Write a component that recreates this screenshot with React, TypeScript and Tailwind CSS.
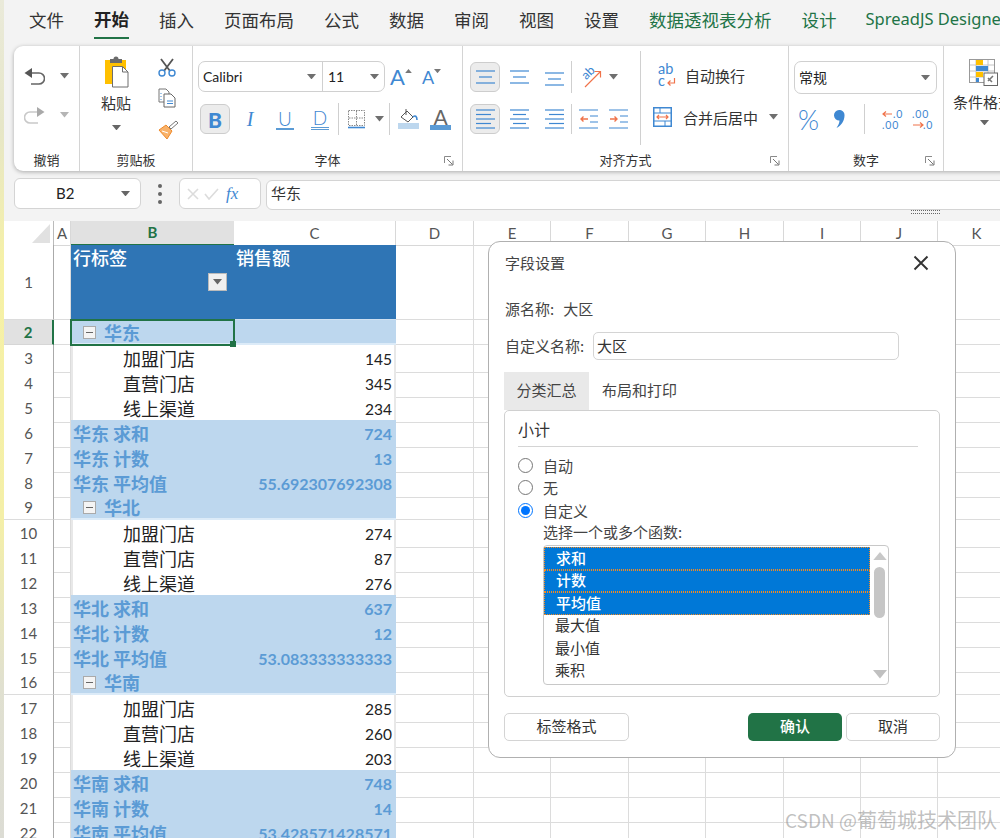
import React from "react";

const BLUE = "#3f88d2";
const ORANGE = "#f0734a";
const lato = "font-['Lato','Noto_Sans_CJK_SC',sans-serif]";

const Tri = ({ c = "#6f6f6f", w = 9, up = false }: { c?: string; w?: number; up?: boolean }) => (
  <svg width={w} height={w * 0.6} viewBox="0 0 10 6" className="shrink-0 block">
    <polygon points={up ? "5,0 10,6 0,6" : "0,0 10,0 5,6"} fill={c} />
  </svg>
);

const Lines = ({ lines, w = 19, h = 20 }: { lines: number[][]; w?: number; h?: number }) => (
  <svg width={w} height={h} viewBox={`0 0 ${w} ${h}`} className="shrink-0 block">
    {lines.map((l, i) => (
      <line key={i} x1={l[0]} x2={l[1]} y1={l[2]} y2={l[2]} stroke={BLUE} strokeWidth="1.2" />
    ))}
  </svg>
);

const Launcher = () => (
  <svg width="10" height="10" viewBox="0 0 10 10" className="block">
    <path d="M.5 7V.5H7" fill="none" stroke="#8a8a8a" />
    <path d="M3 3l5.5 5.5M9 4.5V9H4.5" fill="none" stroke="#777" />
  </svg>
);

const Undo = ({ redo = false }: { redo?: boolean }) => {
  const line = redo ? "#c9c9c9" : "#666";
  const head = redo ? "#a9a9a9" : "#555";
  return (
    <svg width="21" height="19" viewBox="0 0 21 19" className="block" style={redo ? { transform: "scaleX(-1)" } : undefined}>
      <path d="M3 6h12a5 5 0 0 1 0 11H7" fill="none" stroke={line} strokeWidth="1.6" />
      <polygon points="0.5,6 8,1 8,11" fill={head} />
    </svg>
  );
};

const PasteIcon = () => (
  <svg width="26" height="33" viewBox="0 0 26 33" className="block">
    <rect x="1" y="5" width="21" height="24" fill="#ffc000" />
    <path d="M6 4h3.5a2.5 2.5 0 0 1 5 0H18v4H6z" fill="#6b6b6b" />
    <path d="M8.5 11.5h10l5.5 5.5v15H8.5z" fill="#fff" stroke="#6e6e6e" strokeWidth="1" />
    <path d="M18.5 11.5v5.5h5.5" fill="none" stroke="#6e6e6e" />
  </svg>
);

const Cut = () => (
  <svg width="18" height="19" viewBox="0 0 18 19" className="block">
    <path d="M3 1l9 12M15 1L6 13" stroke="#555" strokeWidth="1.8" fill="none" />
    <circle cx="4" cy="15" r="3" fill="none" stroke={BLUE} strokeWidth="1.4" />
    <circle cx="14" cy="15" r="3" fill="none" stroke={BLUE} strokeWidth="1.4" />
  </svg>
);

const Copy = () => (
  <svg width="18" height="20" viewBox="0 0 18 20" className="block">
    <path d="M1 1h7l3 3v10H1z" fill="#fff" stroke="#777" />
    <path d="M6 6h7l4 4v9H6z" fill="#fff" stroke="#666" />
    <path d="M3 5v1M3 8v1M3 11v1" stroke={BLUE} />
    <path d="M9 13h6M9 15.5h6" stroke={BLUE} />
  </svg>
);

const Brush = () => (
  <svg width="21" height="20" viewBox="0 0 21 20" className="block">
    <path d="M1 10l7-5 6 6-5 8z" fill="#f9b26a" stroke="#ee8a2c" />
    <path d="M4 11l6 2" stroke="#fff" />
    <path d="M11 7l2 2 7-6-2-2z" fill="#fff" stroke="#777" />
  </svg>
);

const BorderIcon = () => (
  <svg width="17" height="19" viewBox="0 0 17 19" className="block">
    <rect x=".5" y=".5" width="16" height="15" fill="none" stroke="#888" strokeDasharray="1.5 1" />
    <path d="M8.5 1v15M1 8h15" stroke="#888" strokeDasharray="1.5 1" />
    <path d="M0 17.5h17" stroke={BLUE} strokeWidth="1.6" />
  </svg>
);

const Fill = () => (
  <svg width="21" height="20" viewBox="0 0 21 20" className="block">
    <path d="M3 8l6-6 6 6-5 5z" fill="#fff" stroke="#555" />
    <path d="M8 0v6" stroke="#555" />
    <path d="M15 8c2-2 4-1 4 3" fill="none" stroke={BLUE} strokeWidth="1.6" />
    <rect x="0" y="14" width="21" height="6" fill="#bdd7ee" />
  </svg>
);

const FontColor = () => (
  <div className="w-[21px] flex flex-col items-center">
    <span className={`${lato} text-[21px] leading-[17px] h-[17px] text-[#666]`}>A</span>
    <span className="block w-[21px] h-[5px] bg-[#5b9bd5]" />
  </div>
);

const Orient = () => (
  <svg width="23" height="23" viewBox="0 0 23 23" className="block overflow-visible">
    <text x="3" y="12" fontSize="12.5" fill={BLUE} fontFamily="Lato" transform="rotate(-45 8 8)">ab</text>
    <path d="M6 21L21 6M15.5 5.5h6v6" fill="none" stroke={ORANGE} strokeWidth="1.2" />
  </svg>
);

const Wrap = () => (
  <svg width="18" height="23" viewBox="0 0 18 23" className="block overflow-visible">
    <text x="0" y="10" fontSize="14.5" fill={BLUE} fontFamily="Lato">ab</text>
    <text x="0" y="22" fontSize="14.5" fill={BLUE} fontFamily="Lato">c</text>
    <path d="M16.5 14v5H10M12.5 16.5L10 19l2.5 2.5" fill="none" stroke={ORANGE} strokeWidth="1.2" />
  </svg>
);

const Merge = () => (
  <svg width="19" height="20" viewBox="0 0 19 20" className="block">
    <rect x=".75" y=".75" width="17.5" height="18.5" fill="#fff" stroke={BLUE} strokeWidth="1.5" />
    <path d="M1 6h17M1 14h17M7 1v5M12 14v5" stroke={BLUE} />
    <path d="M4 10h11M6 8l-2 2 2 2M13 8l2 2-2 2" fill="none" stroke={ORANGE} strokeWidth="1.2" />
  </svg>
);

const Indent = ({ inc = false }: { inc?: boolean }) => (
  <svg width="19" height="20" viewBox="0 0 19 20" className="block">
    <path d="M0 1h19M0 19h19" stroke={BLUE} strokeWidth="1.2" />
    <path d="M11 7h8M11 13h8" stroke={BLUE} strokeWidth="1.2" />
    {inc ? (
      <path d="M1 10h7M5.5 7.5L8 10l-2.5 2.5" fill="none" stroke={ORANGE} strokeWidth="1.4" />
    ) : (
      <path d="M2 10h7M4.5 7.5L2 10l2.5 2.5" fill="none" stroke={ORANGE} strokeWidth="1.4" />
    )}
  </svg>
);

const Comma = () => (
  <svg width="11" height="18" viewBox="0 0 11 18" className="block">
    <path d="M5 0a5 5 0 0 1 5.5 5.5c0 5-3 10-8 12.5 2-3 3-5.5 3-7.5A5 5 0 0 1 5 0z" fill={BLUE} />
  </svg>
);

const Dec = ({ inc = false }: { inc?: boolean }) => (
  <svg width="20" height="21" viewBox="0 0 20 21" className="block overflow-visible">
    {inc ? (
      <>
        <text x="0" y="9" fontSize="10.5" fill={BLUE} fontFamily="Lato" letterSpacing="0.8">.00</text>
        <path d="M1 16h10M8 13.5l3 2.5-3 2.5" fill="none" stroke={ORANGE} strokeWidth="1.2" />
        <text x="11" y="20" fontSize="10.5" fill={BLUE} fontFamily="Lato" letterSpacing="0.8">.0</text>
      </>
    ) : (
      <>
        <path d="M1 5h9M4 2.5L1 5l3 2.5" fill="none" stroke={ORANGE} strokeWidth="1.2" />
        <text x="11" y="9" fontSize="10.5" fill={BLUE} fontFamily="Lato" letterSpacing="0.8">.0</text>
        <text x="0" y="20" fontSize="10.5" fill={BLUE} fontFamily="Lato" letterSpacing="0.8">.00</text>
      </>
    )}
  </svg>
);

const CondFormat = () => (
  <svg width="29" height="27" viewBox="0 0 29 27" className="block">
    <rect x=".5" y=".5" width="25" height="23" fill="#fff" stroke="#999" />
    <path d="M7 1v22M19 1v22M1 6h24M1 12h24M1 18h24" stroke="#c4c4c4" />
    <rect x="7" y="1" width="7" height="5" fill="#ffc000" />
    <rect x="7" y="7" width="12" height="5" fill={BLUE} />
    <rect x="7" y="13" width="7" height="5" fill="#ffc000" />
    <rect x="7" y="19" width="3" height="4" fill={BLUE} />
    <rect x="15" y="14" width="13.5" height="12.5" fill="#fff" stroke="#666" />
    <path d="M19 22l5-5M19 19l4 4" stroke="#777" strokeWidth="1.6" />
  </svg>
);

function Group({
  w,
  label,
  launcher,
  last,
  children,
}: {
  w: number;
  label: string;
  launcher?: boolean;
  last?: boolean;
  children: React.ReactNode;
}) {
  return (
    <div
      className={`flex flex-col shrink-0 h-[125px] ${last ? "" : "border-r border-[#d4d4d4]"}`}
      style={{ width: w }}
    >
      <div className="h-[103px]">{children}</div>
      <div className="h-[22px] flex items-center justify-center relative text-[13px] text-[#333]">
        {label}
        {launcher && (
          <span className="absolute right-[8px] top-[7px]">
            <Launcher />
          </span>
        )}
      </div>
    </div>
  );
}

const Sep = ({ ml, h = 32 }: { ml: string; h?: number }) => (
  <span className={`block w-px bg-[#cfcfcf] shrink-0 ${ml}`} style={{ height: h }} />
);

const Pressed = ({ children }: { children: React.ReactNode }) => (
  <div className="w-[30px] h-[30px] rounded-[6px] border border-[#cdcdcd] bg-[#ececec] flex items-center justify-center shrink-0">
    {children}
  </div>
);

function Ribbon() {
  return (
    <div className="flex w-[1100px] h-[125px] ml-[10px] bg-white rounded-l-[9px] shadow-[0_1px_4px_rgba(0,0,0,0.3)] shrink-0">
      <Group w={66} label="撤销">
        <div className="flex items-center h-[30px] mt-[15px] pl-[10px]">
          <Undo />
          <span className="ml-[15px]"><Tri /></span>
        </div>
        <div className="flex items-center h-[30px] mt-[9px] pl-[10px]">
          <Undo redo />
          <span className="ml-[15px]"><Tri c="#b5b5b5" /></span>
        </div>
      </Group>

      <Group w={113} label="剪贴板">
        <div className="flex">
          <div className="w-[72px] flex flex-col items-center">
            <div className="mt-[9px] ml-[2px]"><PasteIcon /></div>
            <div className="mt-[4px] text-[15px] leading-[22px] text-[#333]">粘贴</div>
            <div className="mt-[11px]"><Tri c="#666" /></div>
          </div>
          <div className="flex flex-col pl-[6px]">
            <div className="mt-[12px]"><Cut /></div>
            <div className="mt-[11px]"><Copy /></div>
            <div className="mt-[12px]"><Brush /></div>
          </div>
        </div>
      </Group>

      <Group w={270} label="字体" launcher>
        <div className="flex items-center mt-[15px] ml-[5px] h-[31px]">
          <div className="flex h-[31px] w-[187px] border border-[#d0d0d0] rounded-[7px] shrink-0">
            <div className={`w-[124px] border-r border-[#d0d0d0] flex items-center justify-between pl-[4px] pr-[6px] text-[14px] text-[#222] ${lato}`}>
              Calibri <Tri />
            </div>
            <div className={`flex-1 flex items-center justify-between pl-[5px] pr-[5px] text-[14px] text-[#222] ${lato}`}>
              11 <Tri />
            </div>
          </div>
          <div className="ml-[5px] w-[25px] flex items-start relative h-[24px]">
            <span className={`${lato} text-[22px] leading-[24px] text-[#3f88d2]`}>A</span>
            <span className="mt-[4px]"><Tri c="#777" w={7} up /></span>
          </div>
          <div className="ml-[7px] w-[22px] flex items-start h-[24px]">
            <span className={`${lato} text-[18px] leading-[25px] text-[#3f88d2]`}>A</span>
            <span className="mt-[4px]"><Tri c="#777" w={7} /></span>
          </div>
        </div>
        <div className="flex items-center mt-[11px] ml-[7px] h-[32px]">
          <Pressed><span className={`${lato} text-[21px] font-black leading-none text-[#3f88d2]`}>B</span></Pressed>
          <span className="ml-[10px] w-[20px] text-center font-['Liberation_Serif',serif] italic text-[20px] leading-none text-[#3f88d2]">I</span>
          <span className={`ml-[15px] w-[20px] flex flex-col items-center ${lato}`}>
            <span className="text-[19px] leading-[19px] text-[#3f88d2] border-b-2 border-[#5b9bd5] px-[2px] font-light">U</span>
          </span>
          <span className={`ml-[15px] w-[20px] flex flex-col items-center ${lato}`}>
            <span className="text-[19px] leading-[18px] text-[#3f88d2] border-b-[3px] border-double border-[#5b9bd5] px-[2px] font-light">D</span>
          </span>
          <Sep ml="ml-[8px]" />
          <span className="ml-[9px]"><BorderIcon /></span>
          <span className="ml-[10px]"><Tri /></span>
          <Sep ml="ml-[5px]" />
          <span className="ml-[8px]"><Fill /></span>
          <span className="ml-[11px]"><FontColor /></span>
        </div>
      </Group>

      <Group w={326} label="对齐方式" launcher>
        <div className="flex pt-[5px]">
          <div className="w-[178px] h-[94px] border-r border-[#d0d0d0] pl-[7px] pt-[10px]">
            <div className="flex items-center h-[32px]">
              <Pressed><Lines lines={[[0, 19, 2], [3, 16, 8], [0, 19, 14]]} h={16} /></Pressed>
              <span className="ml-[10px]"><Lines lines={[[0, 19, 4], [3, 16, 10], [0, 19, 16]]} /></span>
              <span className="ml-[16px]"><Lines lines={[[0, 19, 6], [3, 16, 12], [0, 19, 18]]} /></span>
              <Sep ml="ml-[7px]" />
              <span className="ml-[7px]"><Orient /></span>
              <span className="ml-[7px]"><Tri /></span>
            </div>
            <div className="flex items-center h-[30px] mt-[11px]">
              <Pressed><Lines lines={[[0, 19, 1], [0, 15, 5.5], [0, 19, 10], [0, 15, 14.5], [0, 19, 19]]} /></Pressed>
              <span className="ml-[10px]"><Lines lines={[[0, 19, 1], [3, 16, 5.5], [0, 19, 10], [3, 16, 14.5], [0, 19, 19]]} /></span>
              <span className="ml-[16px]"><Lines lines={[[0, 19, 1], [4, 19, 5.5], [0, 19, 10], [4, 19, 14.5], [0, 19, 19]]} /></span>
              <Sep ml="ml-[7px]" h={30} />
              <span className="ml-[7px]"><Indent /></span>
              <span className="ml-[11px]"><Indent inc /></span>
            </div>
          </div>
          <div className="flex-1 text-[15px] text-[#333]">
            <div className="flex items-center h-[32px] mt-[8px] pl-[17px]">
              <Wrap />
              <span className="ml-[9px] leading-none">自动换行</span>
            </div>
            <div className="flex items-center h-[30px] mt-[11px] pl-[12px]">
              <Merge />
              <span className="ml-[11px] leading-none">合并后居中</span>
              <span className="ml-[11px]"><Tri /></span>
            </div>
          </div>
        </div>
      </Group>

      <Group w={155} label="数字" launcher>
        <div className="ml-[5px] mt-[15px] w-[143px] h-[33px] border border-[#d0d0d0] rounded-[7px] flex items-center justify-between pl-[4px] pr-[6px] text-[14px] text-[#222]">
          常规 <Tri />
        </div>
        <div className="flex items-center mt-[10px] h-[30px] ml-[9px]">
          <span className={`${lato} text-[27px] leading-none text-[#3f88d2] w-[22px] font-light`}>%</span>
          <span className="ml-[14px]"><Comma /></span>
          <Sep ml="ml-[19px]" h={30} />
          <span className="ml-[17px]"><Dec /></span>
          <span className="ml-[10px]"><Dec inc /></span>
        </div>
      </Group>

      <Group w={110} label="" last>
        <div className="pl-[9px]">
          <div className="mt-[13px] ml-[16px]"><CondFormat /></div>
          <div className="mt-[5px] text-[15px] leading-[22px] text-[#333] whitespace-nowrap">条件格式</div>
          <div className="mt-[7px] ml-[27px]"><Tri c="#666" /></div>
        </div>
      </Group>
    </div>
  );
}

function FormulaBar() {
  return (
    <div className="flex mt-[7px] ml-[10px] h-[32px] shrink-0">
      <div className={`w-[127px] h-[31px] shrink-0 bg-white border border-[#d4d4d4] rounded-[6px] flex items-center pl-[41px] pr-[10px] justify-between text-[15px] text-[#222] ${lato}`}>
        B2 <Tri c="#666" />
      </div>
      <div className="w-[38px] h-[31px] shrink-0 flex flex-col items-center justify-center gap-[4px]">
        <span className="w-[4px] h-[4px] rounded-full bg-[#666]" />
        <span className="w-[4px] h-[4px] rounded-full bg-[#666]" />
        <span className="w-[4px] h-[4px] rounded-full bg-[#666]" />
      </div>
      <div className="w-[82px] h-[31px] shrink-0 bg-white border border-[#d4d4d4] rounded-[6px] flex items-center pl-[7px] gap-[5px]">
        <svg width="12" height="12" viewBox="0 0 12 12" className="block"><path d="M1 1l10 10M11 1L1 11" stroke="#dcdcdc" strokeWidth="1.6" /></svg>
        <svg width="15" height="12" viewBox="0 0 15 12" className="block"><path d="M1 6l4 5 9-10" fill="none" stroke="#dcdcdc" strokeWidth="1.6" /></svg>
        <span className="ml-[2px] font-['Liberation_Serif',serif] italic text-[17px] leading-none text-[#3f88d2]">fx</span>
      </div>
      <div className="ml-[5px] mt-[2px] w-[760px] h-[30px] shrink-0 bg-white border border-[#d4d4d4] rounded-l-[6px] flex items-center pl-[4px] pb-[3px] text-[15px] text-[#333]">
        华东
      </div>
    </div>
  );
}

type Row =
  | { n: number; t: "head" }
  | { n: number; t: "group"; b: string }
  | { n: number; t: "data"; b: string; c: number }
  | { n: number; t: "sub"; b: string; c: string };

const regions: [string, number[], string, string, string][] = [
  ["华东", [145, 345, 234], "724", "13", "55.692307692308"],
  ["华北", [274, 87, 276], "637", "12", "53.083333333333"],
  ["华南", [285, 260, 203], "748", "14", "53.428571428571"],
];

const rows: Row[] = (() => {
  const r: Row[] = [{ n: 1, t: "head" }];
  let n = 2;
  const names = ["加盟门店", "直营门店", "线上渠道"];
  for (const [name, vals, sum, cnt, avg] of regions) {
    r.push({ n: n++, t: "group", b: name });
    vals.forEach((v, i) => r.push({ n: n++, t: "data", b: names[i], c: v }));
    r.push({ n: n++, t: "sub", b: `${name} 求和`, c: sum });
    r.push({ n: n++, t: "sub", b: `${name} 计数`, c: cnt });
    r.push({ n: n++, t: "sub", b: `${name} 平均值`, c: avg });
  }
  return r;
})();

const GRID =
  "grid grid-cols-[50px_17px_163px_162px_78px_77px_78px_77px_78px_77px_77px_78px] w-[1014px]";
const headers = ["D", "E", "F", "G", "H", "I", "J", "K"];
const gridCell = "border-r border-b border-[#dcdcdc]";

function SheetRow({ row }: { row: Row }) {
  const selected = row.n === 2;
  const h = row.t === "head" ? "h-[75px]" : "h-[25px]";
  let b: React.ReactNode = null;
  let c: React.ReactNode = null;
  if (row.t === "head") {
    b = (
      <div className="relative h-full bg-[#2f75b5] text-white text-[18px] font-medium leading-[25px] pl-[2px] border-b border-[#cfe0f0]">
        行标签
        <span className="absolute left-[137px] top-[28px] w-[19px] h-[18px] bg-[#f0f0f0] border border-[#bbb] flex items-center justify-center">
          <Tri c="#666" />
        </span>
      </div>
    );
    c = (
      <div className="h-full bg-[#2f75b5] text-white text-[18px] font-medium leading-[25px] pl-[2px] border-b border-[#cfe0f0]">
        销售额
      </div>
    );
  } else if (row.t === "group") {
    b = (
      <div className="relative h-full bg-[#bdd7ee] border-b-2 border-[#dcebf8] flex items-center pl-[12px] font-bold text-[18px] text-[#5b9bd5]">
        <span className="w-[13px] h-[13px] bg-[#f4f4f4] border border-[#aaa] flex items-center justify-center mt-[2px] shrink-0">
          <span className="block w-[7px] h-px bg-[#666]" />
        </span>
        <span className="ml-[8px] leading-none">{row.b}</span>
        {selected && (
          <span className="absolute -left-[1px] -top-[1px] w-[165px] h-[27px] border-2 border-[#217346]">
            <span className="absolute -right-[3px] -bottom-[3px] w-[6px] h-[6px] bg-[#217346]" />
          </span>
        )}
      </div>
    );
    c = <div className="h-full bg-[#bdd7ee] border-b-2 border-[#dcebf8]" />;
  } else if (row.t === "data") {
    b = (
      <div className="h-full bg-white border-b-2 border-l-2 border-[#e3eef8] border-l-[#e8e8e8] flex items-center pl-[50px] pb-[1px] text-[18px] text-[#222] leading-none">
        {row.b}
      </div>
    );
    c = (
      <div className={`h-full bg-white border-b-2 border-r-2 border-[#e3eef8] border-r-[#e8e8e8] flex items-center justify-end pr-[2px] pt-[3px] text-[15.5px] text-[#222] ${lato}`}>
        {row.c}
      </div>
    );
  } else {
    b = (
      <div className="h-full bg-[#bdd7ee] border-b-2 border-[#dcebf8] flex items-center pl-[2px] pb-[1px] font-bold text-[18px] text-[#5b9bd5] leading-none whitespace-nowrap">
        {row.b}
      </div>
    );
    c = (
      <div className={`h-full bg-[#bdd7ee] border-b-2 border-[#dcebf8] flex items-center justify-end pr-[4px] pt-[2px] font-bold text-[16px] text-[#5b9bd5] ${lato}`}>
        {row.c}
      </div>
    );
  }
  return (
    <div className={`${GRID} ${h}`}>
      <div
        className={`flex items-center justify-center border-r border-b text-[15px] ${lato} ${
          selected
            ? "bg-[#e1e1e1] border-b-[#d6d6d6] border-r-2 border-r-[#217346] font-bold text-[#217346]"
            : "bg-white border-b-[#dcdcdc] border-r-[#aaa] text-[#555]"
        }`}
      >
        {row.n}
      </div>
      <div className={gridCell} />
      {b}
      {c}
      {headers.map((k) => (
        <div key={k} className={gridCell} />
      ))}
    </div>
  );
}

function Sheet() {
  return (
    <div className="bg-white flex-1 overflow-hidden">
      <div className={`${GRID} h-[24px] text-[#555] text-[15px] ${lato}`}>
        <div className="border-r border-b border-[#bbb] flex items-end justify-end pr-[3px] pb-[2px]">
          <svg width="18" height="19" viewBox="0 0 18 19" className="block"><polygon points="18,0 18,19 0,19" fill="#e1e1e1" /></svg>
        </div>
        <div className="border-r border-b border-[#d8d8d8] flex items-center justify-center">A</div>
        <div className="bg-[#e1e1e1] border-b-2 border-[#217346] flex items-center justify-center font-bold text-[#217346]">B</div>
        <div className="border-r border-b border-[#d8d8d8] flex items-center justify-center">C</div>
        {headers.map((k) => (
          <div key={k} className="border-r border-b border-[#d8d8d8] flex items-center justify-center">{k}</div>
        ))}
      </div>
      {rows.map((r) => (
        <SheetRow key={r.n} row={r} />
      ))}
    </div>
  );
}

const Radio = ({ label, checked = false }: { label: string; checked?: boolean }) => (
  <label className="flex items-center h-[22.5px]">
    <input type="radio" name="sub" checked={checked} readOnly className="w-[15px] h-[15px] m-0" />
    <span className="ml-[10px] text-[15px] text-[#444] leading-none">{label}</span>
  </label>
);

const fnItems = [
  { f: "求和", h: "h-[23px]" },
  { f: "计数", h: "h-[22px]" },
  { f: "平均值", h: "h-[23px]" },
  { f: "最大值", h: "h-[22px]" },
  { f: "最小值", h: "h-[23px]" },
  { f: "乘积", h: "h-[22px]" },
];

function Dialog() {
  return (
    <div className="absolute left-[488px] top-[241px] w-[468px] h-[517px] bg-white border border-[#b0b0b0] rounded-[12px] px-[15px] text-[15px] text-[#444]">
      <div className="flex items-center justify-between h-[42px] pl-[1px] pr-[11px]">
        <span>字段设置</span>
        <svg width="16" height="16" viewBox="0 0 16 16" className="block">
          <path d="M1.5 1.5l13 13M14.5 1.5l-13 13" stroke="#333" strokeWidth="1.9" />
        </svg>
      </div>
      <div className="flex items-center h-[24px] mt-[14px] pl-[1px] pb-[1px]">
        <span>源名称:</span>
        <span className="ml-[9px]">大区</span>
      </div>
      <div className="flex items-center h-[28px] mt-[10px] pl-[1px]">
        <span className="w-[88px] whitespace-nowrap">自定义名称:</span>
        <div className="w-[306px] h-[28px] border border-[#d4d4d4] rounded-[5px] flex items-center pl-[3px] text-[#333]">大区</div>
      </div>
      <div className="flex h-[38px] mt-[12px]">
        <div className="w-[85px] bg-[#e9e9e9] flex items-center justify-center pb-[2px]">分类汇总</div>
        <div className="ml-[13px] flex items-center pb-[2px]">布局和打印</div>
      </div>
      <div className="h-[287px] border border-[#d0d0d0] rounded-[5px] pl-[13px] pr-[21px]">
        <div className="h-[36px] border-b border-[#d4d4d4] flex items-center text-[16px] text-[#333]">小计</div>
        <div className="mt-[7px]">
          <Radio label="自动" />
          <Radio label="无" />
          <Radio label="自定义" checked />
        </div>
        <div className="ml-[25px] h-[23px] flex items-center whitespace-nowrap pb-[1px]">选择一个或多个函数:</div>
        <div className="ml-[25px] w-[346px] h-[140px] border border-[#c8c8c8] rounded-[4px] flex overflow-hidden">
          <div className="w-[326px] pt-[1px] shrink-0">
            {fnItems.map(({ f, h }, i) =>
              i < 3 ? (
                <div key={f} className={`${h} bg-[#0078d7] border border-dotted border-[#f58a1f] flex items-center pl-[11px] pb-[2px] text-white font-medium leading-none`}>
                  {f}
                </div>
              ) : (
                <div key={f} className={`${h} flex items-center pl-[11px] pb-[2px] text-[#333] leading-none`}>{f}</div>
              )
            )}
          </div>
          <div className="flex-1 flex flex-col items-center pl-[1px]">
            <div className="mt-[6px]"><Tri c="#c8c8c8" w={14} up /></div>
            <div className="mt-[7px] w-[11px] h-[51px] rounded-full bg-[#c6c6c6]" />
            <div className="mt-auto mb-[5px]"><Tri c="#c0c0c0" w={14} /></div>
          </div>
        </div>
      </div>
      <div className="flex mt-[16px] h-[28px] text-[#333]">
        <button className="w-[125px] h-[28px] pb-[1px] border border-[#d4d4d4] rounded-[5px] bg-white">标签格式</button>
        <button className="ml-auto w-[94px] h-[28px] pb-[1px] rounded-[5px] bg-[#217346] text-white font-medium">确认</button>
        <button className="ml-[4px] w-[94px] h-[28px] pb-[1px] border border-[#d4d4d4] rounded-[5px] bg-white">取消</button>
      </div>
    </div>
  );
}

const tabs = ["文件", "开始", "插入", "页面布局", "公式", "数据", "审阅", "视图", "设置"];
const greenTabs = ["数据透视表分析", "设计"];

export default function App() {
  return (
    <div className="relative w-[1000px] h-[838px] overflow-hidden flex bg-[#f3f3f3] font-['Noto_Sans_CJK_SC',sans-serif]">
      <div className="w-[4px] shrink-0 bg-[linear-gradient(180deg,#eaeada_0%,#e6e6c8_15%,#f6f1a6_32%,#f4efa8_62%,#e0e0d0_82%,#dcdcd4_100%)]" />
      <div className="flex-1 flex flex-col min-w-0 overflow-hidden">
        <div className="h-[46px] flex items-start pl-[25px] gap-[30px] text-[17.5px] text-[#333] whitespace-nowrap shrink-0">
          {tabs.map((t) => (
            <div
              key={t}
              className={`h-[39px] shrink-0 flex items-center leading-none ${
                t === "开始" ? "font-bold border-b-2 border-[#217346] text-[#222]" : ""
              }`}
            >
              {t}
            </div>
          ))}
          {greenTabs.map((t) => (
            <div key={t} className="h-[39px] shrink-0 flex items-center leading-none text-[#217346]">
              {t}
            </div>
          ))}
          <div className="h-[39px] shrink-0 flex items-center leading-none text-[#217346] text-[16.5px] font-['Noto_Sans',sans-serif] -ml-[1px]">
            SpreadJS Designer
          </div>
        </div>
        <Ribbon />
        <FormulaBar />
        <div className="h-[11px] shrink-0 pl-[907px]">
          <div className="w-[29px] h-[4px] border-y border-dotted border-[#666]" />
        </div>
        <Sheet />
      </div>
      <Dialog />
      <div className="absolute left-[785px] top-[806px] text-[20px] leading-[28px] text-[#8c8c8c]/55 whitespace-nowrap">
        <span className="text-[19px]">CSDN @</span>葡萄城技术团队
      </div>
    </div>
  );
}
